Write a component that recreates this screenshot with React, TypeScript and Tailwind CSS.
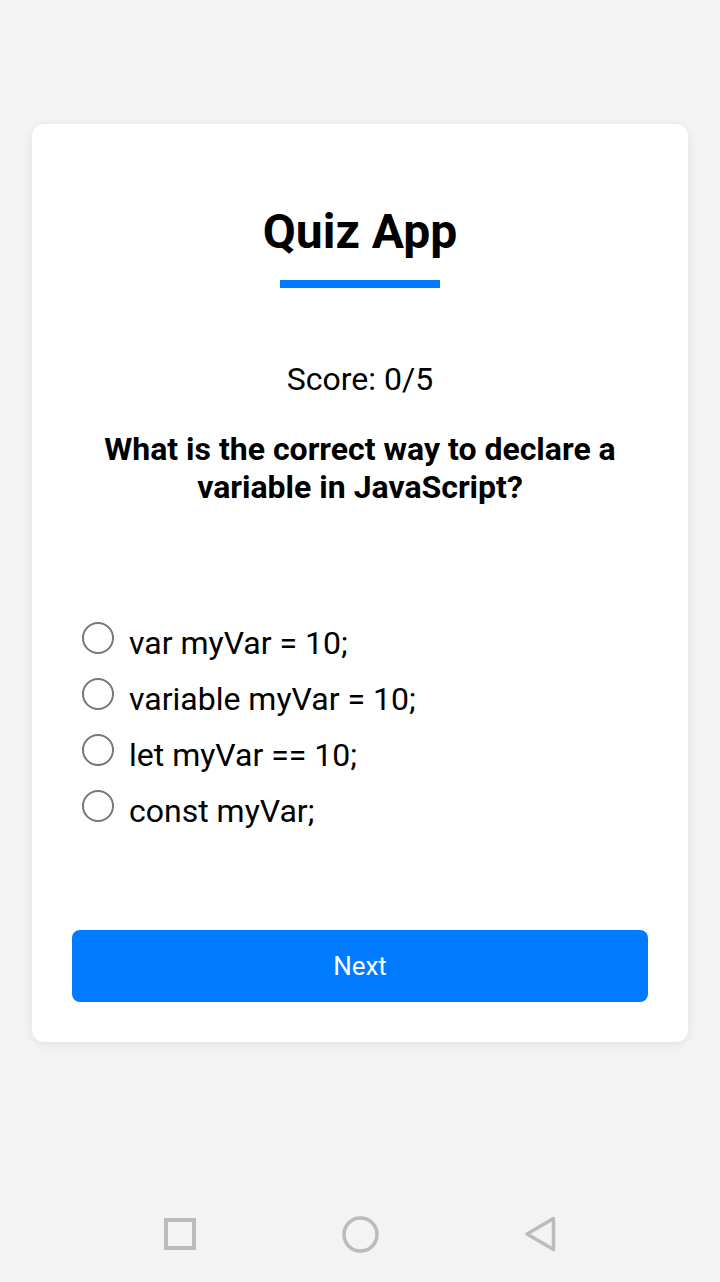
const options = [
  "var myVar = 10;",
  "variable myVar = 10;",
  "let myVar == 10;",
  "const myVar;",
];

const App = () => {
  return (
    <div
      className="w-[720px] h-[1282px] bg-[#f3f3f3] flex flex-col"
      style={{ fontFamily: "Roboto, 'Liberation Sans', sans-serif" }}
    >
      <div className="pt-[124px] px-[32px] flex-1">
        {/* Card */}
        <div className="bg-white rounded-[12px] shadow-[0_2px_10px_rgba(0,0,0,0.08)] px-[40px] pt-[80px] pb-[40px]">
          <h1 className="text-center text-[48px] leading-[56px] font-bold text-black">
            Quiz App
          </h1>
          <div className="mx-auto mt-[20px] w-[160px] h-[8px] bg-[#007bff]" />

          <p className="mt-[71px] text-center text-[32px] leading-[40px] text-black">
            Score: 0/5
          </p>

          <h2 className="mt-[31px] text-center text-[32px] leading-[38px] font-bold text-black px-[10px]">
            What is the correct way to declare a variable in JavaScript?
          </h2>

          {/* Options */}
          <div className="mt-[106px] flex flex-col">
            {options.map((option) => (
              <label key={option} className="h-[56px] flex items-start gap-[15px] pl-[10px]">
                <span className="mt-[10px] w-[32px] h-[32px] rounded-full border-2 border-[#777777] shrink-0" />
                <span className="mt-[11px] text-[32px] text-black leading-[40px]">{option}</span>
              </label>
            ))}
          </div>

          <button className="mt-[94px] w-full h-[72px] rounded-[8px] bg-[#007bff] text-white text-[26px]">
            Next
          </button>
        </div>
      </div>

      {/* Android nav bar */}
      <div className="h-[96px] flex items-center justify-center">
        <div className="w-[180px] flex justify-center">
          <svg width="32" height="32" viewBox="0 0 32 32">
            <rect x="2" y="2" width="28" height="28" fill="none" stroke="#bbbbbb" strokeWidth="4" />
          </svg>
        </div>
        <div className="w-[180px] flex justify-center">
          <svg width="37" height="37" viewBox="0 0 37 37">
            <circle cx="18.5" cy="18.5" r="16.5" fill="none" stroke="#bbbbbb" strokeWidth="3.5" />
          </svg>
        </div>
        <div className="w-[180px] flex justify-center">
          <svg width="32" height="36" viewBox="0 0 32 36">
            <path d="M29.5 2.5 L3 18 L29.5 33.5 Z" fill="none" stroke="#bbbbbb" strokeWidth="3.5" strokeLinejoin="round" />
          </svg>
        </div>
      </div>
    </div>
  );
};

export default App;
